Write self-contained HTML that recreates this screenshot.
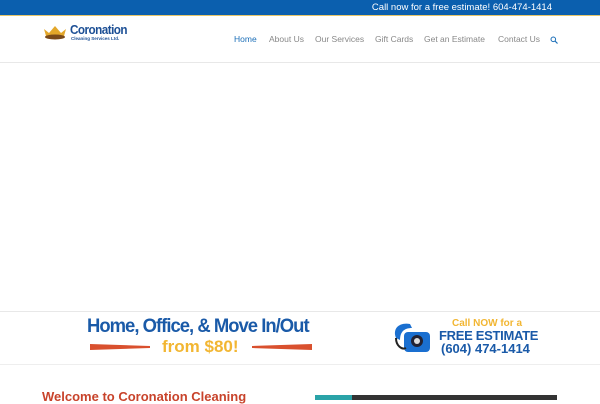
<!DOCTYPE html>
<html><head><style>
*{margin:0;padding:0;box-sizing:border-box}
body{width:600px;height:400px;overflow:hidden;background:#fff;font-family:"Liberation Sans",sans-serif;position:relative}
.top{position:absolute;left:0;top:0;width:600px;height:16px;background:#0b5fae;border-bottom:1px solid #e6c66a}
.top span{position:absolute;right:48px;top:2px;font-size:9.5px;color:#fff}
.nav{position:absolute;top:34px;font-size:8.5px;color:#888}
.a{position:absolute;left:0;top:62px;width:600px;height:250px;border-top:1px solid #e8e8e8;border-bottom:1px solid #e8e8e8}
.band{position:absolute;left:0;top:364px;width:600px;border-top:1px solid #eee}
</style></head><body>
<div class="top"><span>Call now for a free estimate! 604-474-1414</span></div>
<svg style="position:absolute;left:42px;top:24px" width="26" height="16"><path d="M2 5 L7 9 L13 2 L19 9 L24 5 L22 12 L4 12Z" fill="#e3a72a"/><ellipse cx="13" cy="13" rx="10" ry="2.5" fill="#7a4a1a"/></svg>
<div style="position:absolute;left:70px;top:22px;font-size:13px;font-weight:bold;color:#1c4f95;letter-spacing:-0.6px;transform:scaleX(0.9);transform-origin:left">Coronation</div>
<div style="position:absolute;left:71px;top:36px;font-size:4.5px;color:#1c4f95;font-weight:bold">Cleaning Services Ltd.</div>
<div class="nav" style="left:234px;color:#1c6fb8">Home</div>
<div class="nav" style="left:269px">About Us</div>
<div class="nav" style="left:315px">Our Services</div>
<div class="nav" style="left:375px">Gift Cards</div>
<div class="nav" style="left:424px">Get an Estimate</div>
<div class="nav" style="left:498px">Contact Us</div>
<svg style="position:absolute;left:550px;top:36px" width="8" height="8"><circle cx="3.3" cy="3.3" r="2.3" stroke="#1c6fb8" stroke-width="1" fill="none"/><path d="M5 5 L7.5 7.5" stroke="#1c6fb8" stroke-width="1.2"/></svg>
<div class="a"></div>
<div style="position:absolute;left:87px;top:316px;font-size:19px;font-weight:bold;color:#1a5aa8;letter-spacing:-1px;transform:scaleX(0.97);transform-origin:left">Home, Office, &amp; Move In/Out</div>
<div style="position:absolute;left:162px;top:337px;font-size:17px;font-weight:bold;color:#f2b632">from $80!</div>
<svg style="position:absolute;left:90px;top:343px" width="222" height="8"><path d="M0 1 L60 3 L60 5 L0 7Z" fill="#d9502e"/><path d="M222 1 L162 3 L162 5 L222 7Z" fill="#d9502e"/></svg>
<svg style="position:absolute;left:390px;top:320px" width="42" height="36"><path d="M6 18 C2 8 10 2 20 4 L22 8 C14 8 10 12 10 20Z" fill="#1a6fd0"/><rect x="14" y="12" width="26" height="20" rx="4" fill="#1a6fd0"/><circle cx="27" cy="21" r="6" fill="#223"/><circle cx="27" cy="21" r="3" fill="#ddd"/><path d="M6 18 C6 26 12 30 16 28" stroke="#222" stroke-width="2" fill="none"/></svg>
<div style="position:absolute;left:452px;top:318px;font-size:10px;font-weight:bold;color:#f2b632">Call NOW for a</div>
<div style="position:absolute;left:439px;top:328px;font-size:13px;font-weight:bold;color:#1a5aa8;letter-spacing:-0.3px">FREE ESTIMATE</div>
<div style="position:absolute;left:441px;top:341px;font-size:13px;font-weight:bold;color:#1a5aa8">(604) 474-1414</div>
<div class="band"></div>
<div style="position:absolute;left:42px;top:389px;font-size:13px;font-weight:bold;color:#c8432b">Welcome to Coronation Cleaning</div>
<div style="position:absolute;left:315px;top:395px;width:242px;height:5px;background:#333"><div style="width:37px;height:5px;background:#2aa3a8"></div></div>
</body></html>
